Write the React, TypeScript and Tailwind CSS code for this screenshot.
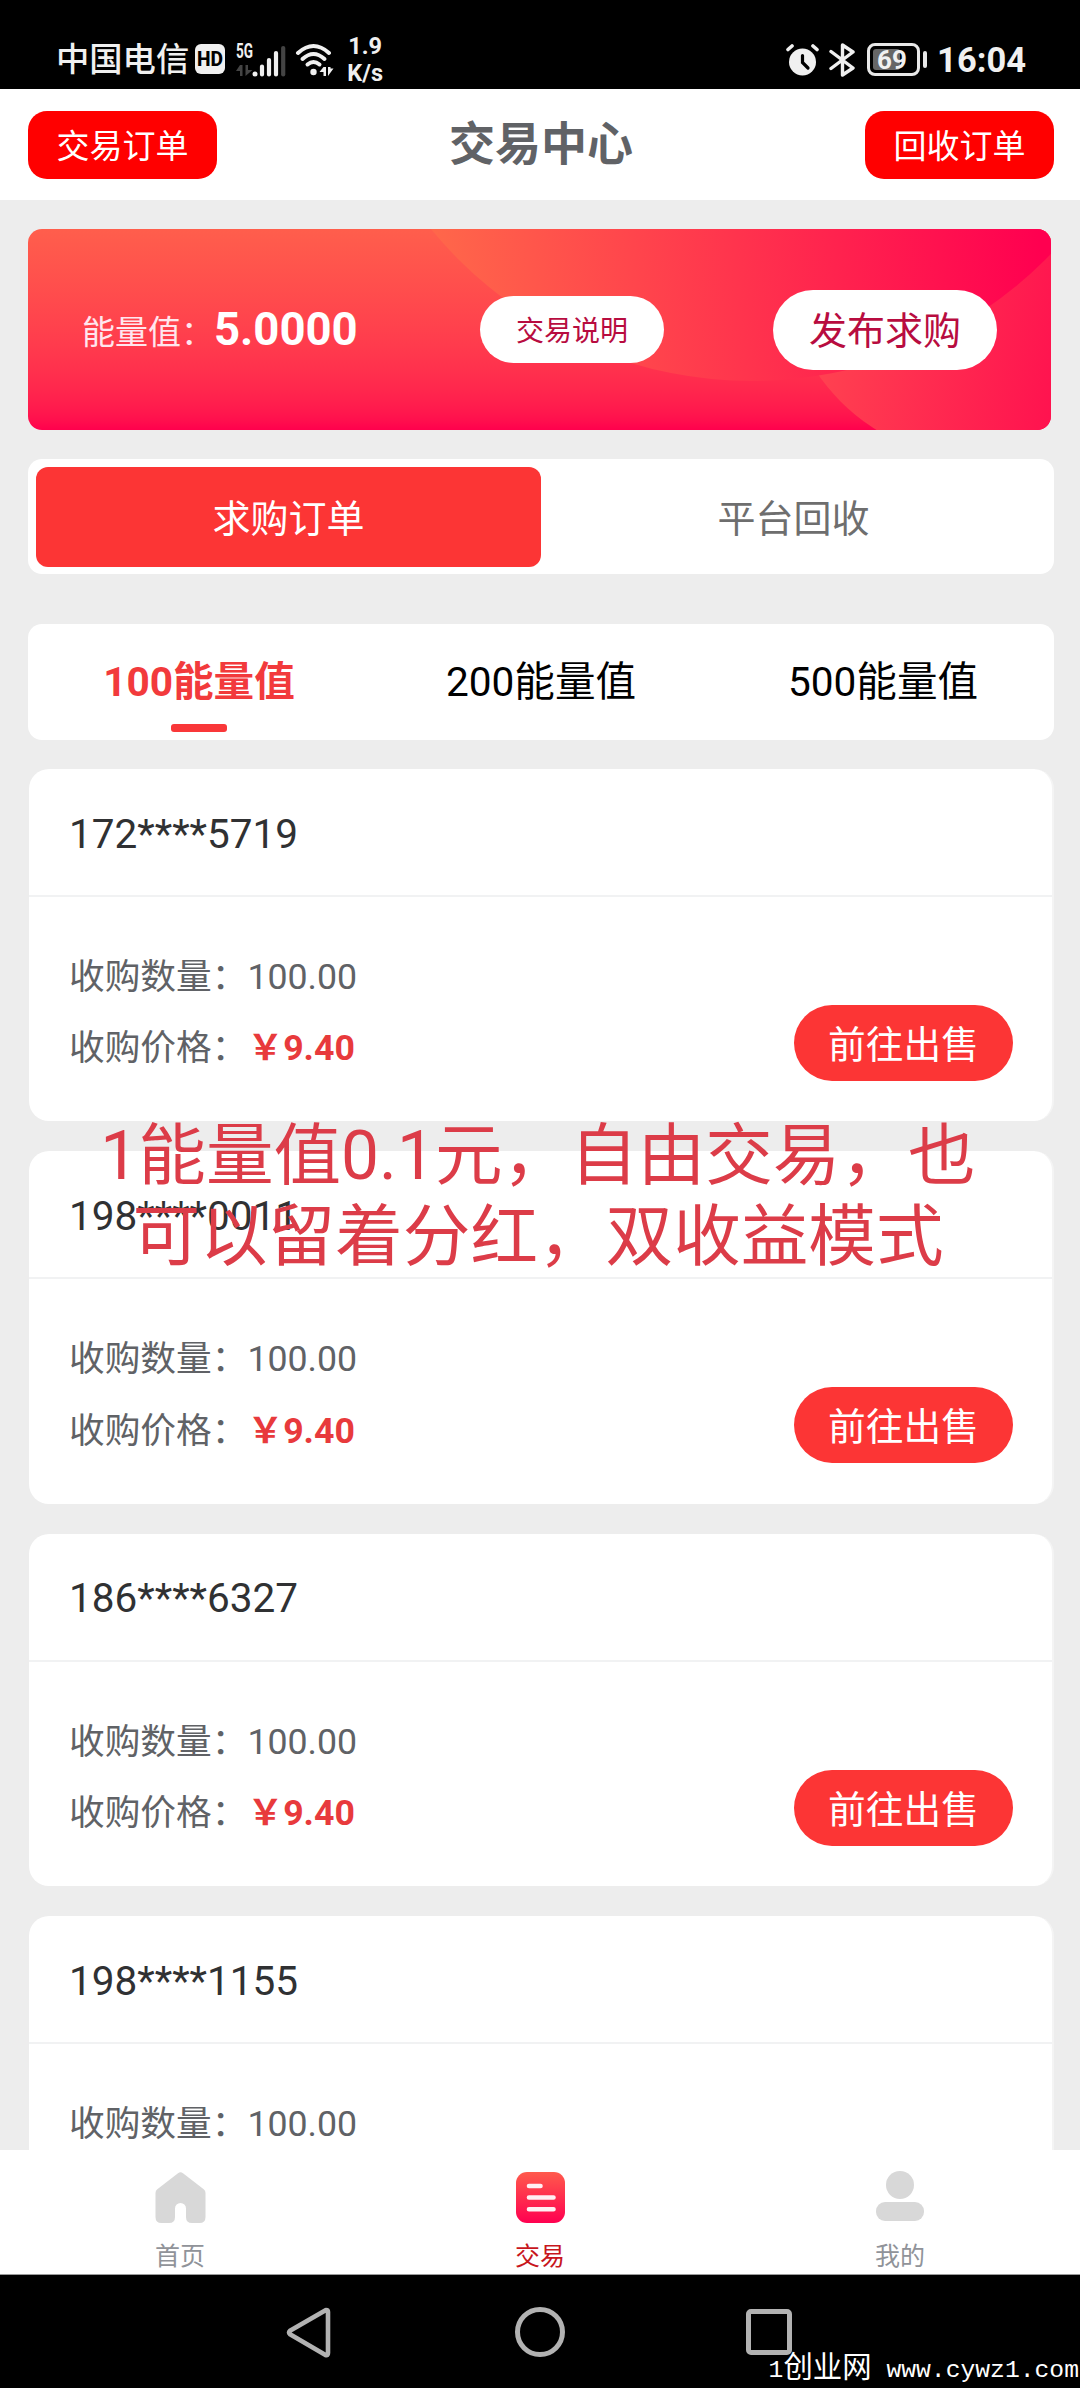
import React from "react";

const orders = [
  { phone: "172****5719", amount: "100.00", price: "9.40" },
  { phone: "198****0011", amount: "100.00", price: "9.40" },
  { phone: "186****6327", amount: "100.00", price: "9.40" },
  { phone: "198****1155", amount: "100.00", price: "9.40" },
];

const energyTabs = ["100能量值", "200能量值", "500能量值"];

function SignalIcon() {
  return (
    <svg className="ml-[11px] h-[34px] w-[50px] overflow-visible" viewBox="0 0 50 34">
      <text x="0" y="15" fontSize="20" fontWeight="700" textLength="17" lengthAdjust="spacingAndGlyphs" fill="#f0f0f0">5G</text>
      <path d="M4 22h2.500v11h-2.500v-5h-4zM9.500 33v-11h2.500v5h4.500z" fill="#444" />
      <circle cx="19" cy="31" r="2.500" fill="#f0f0f0" />
      <path d="M26 23.500v8M33 17v14.500M40 10v21.500" stroke="#f0f0f0" strokeWidth="4.200" strokeLinecap="round" />
      <path d="M47.200 5v26.500" stroke="#444" strokeWidth="4.200" strokeLinecap="round" />
    </svg>
  );
}

function WifiIcon() {
  return (
    <svg className="ml-[9px] h-[34px] w-[40px]" viewBox="0 0 40 34" fill="none" stroke="#f0f0f0" strokeLinecap="round">
      <path d="M3 10Q18.500-4 34 10" strokeWidth="4" />
      <path d="M7.500 16Q18.500 6 29.500 16" strokeWidth="4" />
      <path d="M12.500 21.500Q18.500 16.500 24.500 21.500" strokeWidth="4" />
      <circle cx="18.500" cy="29" r="3.200" fill="#f0f0f0" stroke="none" />
      <path d="M28.500 24h2.500v9h-2.500v-4h-4zM33 33v-9h2.500v1.500h3z" fill="#f0f0f0" stroke="none" />
    </svg>
  );
}

function AlarmIcon() {
  return (
    <svg className="h-[33px] w-[33px]" viewBox="0 0 33 33" fill="none" strokeLinecap="round">
      <circle cx="16.500" cy="19" r="13.500" fill="#f0f0f0" />
      <path d="M2 6.500L6 3M31 6.500L27 3" stroke="#f0f0f0" strokeWidth="3.600" />
      <path d="M16.500 12.500v7l5.500 5.500" stroke="#000" strokeWidth="3.200" />
    </svg>
  );
}

function BluetoothIcon() {
  return (
    <svg className="ml-[10px] h-[34px] w-[27px]" viewBox="0 0 27 34" fill="none" stroke="#f0f0f0" strokeWidth="3.400" strokeLinejoin="round" strokeLinecap="round">
      <path d="M2 8.500L24 25 13.500 32V2L24 9 2 25.500" />
    </svg>
  );
}

function StatusBar() {
  return (
    <div className="flex h-[89px] w-full items-center bg-black pt-[30px] text-[#f0f0f0]">
      <div className="ml-[56px] text-[33.300px] font-medium leading-[40px]">中国电信</div>
      <div className="ml-[6px] mt-[-1px] flex h-[30px] w-[30px] items-center justify-center rounded-[6px] bg-[#f0f0f0]">
        <svg className="h-[20px] w-[26px] overflow-visible" viewBox="0 0 26 20">
          <text x="0" y="17" fontSize="20" fontWeight="800" textLength="26" lengthAdjust="spacingAndGlyphs" fill="#000">HD</text>
        </svg>
      </div>
      <SignalIcon />
      <WifiIcon />
      <div className="ml-[12px] mt-[1px] flex w-[36px] flex-col items-center text-[23.500px] font-bold leading-[27.500px]">
        <span>1.9</span>
        <span>K/s</span>
      </div>
      <div className="ml-auto mr-[54px] flex items-center">
        <AlarmIcon />
        <BluetoothIcon />
        <div className="ml-[11px] flex h-[33px] w-[53px] items-center rounded-[8px] border-[3px] border-[#e8e8e8] p-[3px]">
          <div className="flex h-full w-[27px] items-center rounded-[3px] bg-[#666] pl-[4px] text-[26px] font-bold leading-none">69</div>
        </div>
        <div className="ml-[3px] h-[17px] w-[4px] rounded-full bg-[#e8e8e8]" />
        <div className="ml-[10px] text-[34.500px] font-bold leading-[40px]">16:04</div>
      </div>
    </div>
  );
}

function Header() {
  return (
    <div className="flex h-[111px] w-full items-center justify-between bg-white pl-[28px] pr-[26px]">
      <button className="flex h-[68px] w-[189px] items-center justify-center rounded-[19px] bg-[#ff0000] pt-[5px] text-[33px] leading-[40px] text-white">交易订单</button>
      <h1 className="pb-[2px] text-[46px] font-bold leading-[56px] text-[#606266]">交易中心</h1>
      <button className="flex h-[68px] w-[189px] items-center justify-center rounded-[19px] bg-[#ff0000] pt-[5px] text-[33px] leading-[40px] text-white">回收订单</button>
    </div>
  );
}

function EnergyBanner() {
  return (
    <div className="relative ml-[28px] mt-[29px] h-[201px] w-[1023px] overflow-hidden rounded-[14px] bg-linear-to-b from-[#ff5e4c] to-[#ff004d]">
      <svg className="absolute inset-0 h-full w-full" viewBox="0 0 1023 201">
        <defs>
          <linearGradient id="upper" gradientUnits="userSpaceOnUse" x1="404" y1="60" x2="1010" y2="0">
            <stop offset="0" stopColor="#ff684a" />
            <stop offset="1" stopColor="#ff0050" />
          </linearGradient>
          <linearGradient id="lower" gradientUnits="userSpaceOnUse" x1="800" y1="130" x2="1040" y2="170">
            <stop offset="0" stopColor="#ff4050" />
            <stop offset="1" stopColor="#ff104f" />
          </linearGradient>
        </defs>
        <circle cx="954" cy="31" r="200" fill="url(#lower)" />
        <circle cx="724" cy="-263" r="415" fill="url(#upper)" />
      </svg>
      <div className="relative flex h-full items-center">
        <span className="ml-[54px] w-[132px] whitespace-nowrap pt-[6px] text-[33px] leading-[40px] text-[#ffe6ee]">能量值：</span>
        <span className="w-[172px] text-[45.500px] font-bold leading-[50px] text-white">5.0000</span>
        <button className="ml-[94px] flex h-[67px] w-[184px] items-center justify-center rounded-full bg-white pt-[4px] text-[28px] leading-[34px] text-[#b80c40]">交易说明</button>
        <button className="ml-[109px] flex h-[80px] w-[224px] items-center justify-center rounded-full bg-white pt-[3px] text-[38px] leading-[46px] text-[#b80c40]">发布求购</button>
      </div>
    </div>
  );
}

function ModeSwitch() {
  return (
    <div className="ml-[28px] mt-[29px] flex h-[115px] w-[1026px] items-center rounded-[14px] bg-white px-[8px] text-[38px] leading-[46px]">
      <button className="flex h-[100px] flex-1 items-center justify-center rounded-[12px] bg-[#fc3535] pt-[4px] text-white">求购订单</button>
      <button className="flex h-[100px] flex-1 items-center justify-center pt-[4px] text-[#6e6e6e]">平台回收</button>
    </div>
  );
}

function EnergyTabs() {
  return (
    <div className="ml-[28px] mt-[50px] grid h-[116px] w-[1026px] grid-cols-3 rounded-[14px] bg-white">
      {energyTabs.map((label, i) => (
        <button
          key={label}
          className={
            i === 0
              ? "flex flex-col items-center pt-[33px] text-[40.600px] font-bold leading-[50px] text-[#f23a3c]"
              : "flex flex-col items-center pt-[33px] text-[40.600px] leading-[50px] text-black"
          }
        >
          {label}
          {i === 0 && <span className="mt-[17px] h-[8px] w-[56px] rounded-[3px] bg-[#f93739]" />}
        </button>
      ))}
    </div>
  );
}

type Order = { phone: string; amount: string; price: string };

function OrderCard({ order }: { order: Order }) {
  return (
    <div className="flex h-[352.400px] w-[1025px] shrink-0 flex-col rounded-[20px] border-r-2 border-[#f4f4f4] bg-white">
      <div className="flex h-[128px] items-center border-b-2 border-[#f1f2f3] pl-[40px] pt-[3px] text-[40.500px] leading-[50px] text-[#303133]">
        {order.phone}
      </div>
      <div className="flex flex-1 justify-between pl-[40px] pr-[39px] pt-[45px] text-[35.700px] leading-[71.200px] text-[#606266]">
        <div>
          <div>
            收购数量：<span>{order.amount}</span>
          </div>
          <div>
            收购价格：<span className="font-bold text-[#e83a3c]">￥{order.price}</span>
          </div>
        </div>
        <button className="mt-[63px] flex h-[76px] w-[219px] items-center justify-center rounded-full bg-[#fc3535] pt-[4px] text-[37.700px] leading-[46px] text-white">前往出售</button>
      </div>
    </div>
  );
}

function TabBar() {
  return (
    <nav className="grid h-[125px] w-full shrink-0 grid-cols-3 border-b border-[#9a9a9a] bg-white text-[25px] leading-[30px] text-[#909399]">
      <div className="flex flex-col items-center pt-[22px]">
        <svg className="h-[51px] w-[51px]" viewBox="0 0 51 51">
          <path d="M23 1.200q2.500-2 5 0L49 17.500q1.500 1.300 1.500 3.500v24q0 6-6 6H37q-6 0-6-6V36.500a5.500 5.500 0 0 0-11 0V45q0 6-6 6H6.500q-6 0-6-6V21q0-2.200 1.500-3.500z" fill="#d8d8d8" />
        </svg>
        <span className="mt-[19px]">首页</span>
      </div>
      <div className="flex flex-col items-center pt-[22px] text-[#c8161d]">
        <svg className="h-[51px] w-[49px]" viewBox="0 0 49 51">
          <defs>
            <linearGradient id="trade" x1="0" y1="0" x2="0" y2="1">
              <stop offset="0" stopColor="#ff5a4c" />
              <stop offset="1" stopColor="#ff0050" />
            </linearGradient>
          </defs>
          <rect width="49" height="51" rx="11" fill="url(#trade)" />
          <path d="M13 14H24.500M13 25.500H37.500M13 37.200H37.500" stroke="#fff0f3" strokeWidth="4.600" strokeLinecap="round" />
        </svg>
        <span className="mt-[19px]">交易</span>
      </div>
      <div className="flex flex-col items-center pt-[21px]">
        <svg className="h-[51px] w-[48px]" viewBox="0 0 48 51" fill="#d8d8d8">
          <circle cx="24" cy="14" r="14" />
          <rect y="31" width="48" height="19" rx="9" />
        </svg>
        <span className="mt-[20px]">我的</span>
      </div>
    </nav>
  );
}

function SystemNav() {
  return (
    <div className="relative flex h-[113px] w-full items-start bg-black pt-[32px]">
      <svg className="ml-[286px] h-[51px] w-[45px]" viewBox="0 0 45 51" fill="none" stroke="#b2b2b2" strokeWidth="4.600" strokeLinejoin="round">
        <path d="M40 3q2 0 2 2V46q0 3-2.500 2L4 27.200q-2-1.700 0-3.400z" />
      </svg>
      <div className="ml-[184px] h-[50px] w-[50px] rounded-full border-[5px] border-[#b2b2b2]" />
      <div className="ml-[181px] mt-[2px] h-[46px] w-[46px] rounded-[5px] border-[5px] border-[#b2b2b2]" />
      <div className="absolute bottom-[1px] right-[1px] whitespace-pre font-['Liberation_Mono','Noto_Sans_CJK_SC',monospace] text-[24.700px] leading-[34px] text-white">
        1<span className="text-[29.400px] leading-[34px]">创业网</span> www.cywz1.com
      </div>
    </div>
  );
}

export default function App() {
  return (
    <div className="relative flex h-[2388px] w-[1080px] flex-col overflow-hidden bg-[#ededed] font-[Roboto,'Noto_Sans_CJK_SC',sans-serif]">
      <StatusBar />
      <Header />
      <main className="h-[1950px] shrink-0 overflow-hidden">
        <EnergyBanner />
        <ModeSwitch />
        <EnergyTabs />
        <div className="ml-[29px] mt-[29px] flex flex-col gap-[30px]">
          {orders.map((order) => (
            <OrderCard key={order.phone} order={order} />
          ))}
        </div>
      </main>
      <TabBar />
      <SystemNav />
      <div className="absolute left-[68px] top-[1116px] w-[940px] text-center text-[67.600px] leading-[80.500px] text-[#dc3c48]">
        <p className="whitespace-nowrap">1能量值0.1元，自由交易，也</p>
        <p className="whitespace-nowrap">可以留着分红，双收益模式</p>
      </div>
    </div>
  );
}
